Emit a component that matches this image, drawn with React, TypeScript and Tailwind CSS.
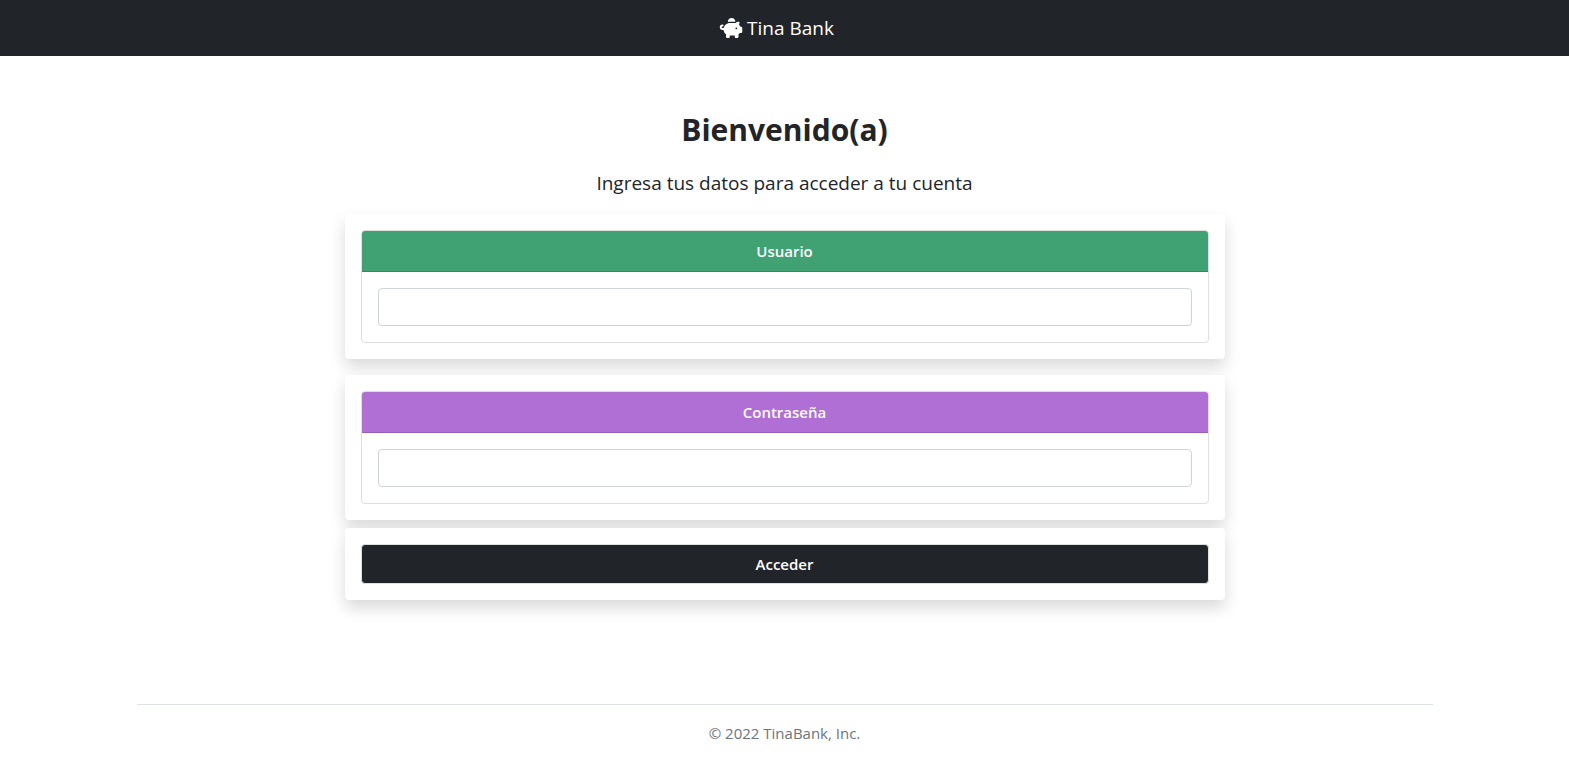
import { FaPiggyBank } from "react-icons/fa6";

const panel = "rounded-[4px] bg-white p-4 shadow-[0_8px_16px_rgba(0,0,0,0.15)]";

function Field({ id, type, label, tone }: { id: string; type: string; label: string; tone: string }) {
  return (
    <div className={panel}>
      <div className="rounded-[4px] border border-[#dfdfdf]">
        <label htmlFor={id} className={`block rounded-t-[3px] border-b px-4 py-2 text-center text-[15px] leading-6 font-semibold text-white ${tone}`}>
          {label}
        </label>
        <div className="p-4">
          <input id={id} type={type} className="block h-[38px] w-full rounded-[4px] border border-[#ced4da] bg-white px-3" />
        </div>
      </div>
    </div>
  );
}

export default function App() {
  return (
    <div className="bg-white font-['Open_Sans',sans-serif] text-base text-[#212529]">
      <nav className="flex h-14 items-center justify-center bg-[#212529] pr-4">
        <a href="#" className="flex items-center gap-1 text-[19px] leading-7 text-white">
          <FaPiggyBank className="h-5 w-6" />
          Tina Bank
        </a>
      </nav>
      <main className="mx-auto w-full max-w-[880px] pt-14">
        <h1 className="text-center text-[30px] leading-9 font-bold">Bienvenido(a)</h1>
        <p className="mt-5 mb-4 text-center text-[19px] leading-[30px]">Ingresa tus datos para acceder a tu cuenta</p>
        <form>
          <div className="flex flex-col gap-4">
            <Field id="usuario" type="text" label="Usuario" tone="border-[#37895f] bg-[#40a173]" />
            <Field id="clave" type="password" label="Contraseña" tone="border-[#995fb9] bg-[#b06fd5]" />
          </div>
          <div className={`relative mt-2 ${panel}`}>
            <button type="button" className="block h-10 w-full rounded-[4px] border border-[#dfdfdf] bg-[#212529] text-center text-[15px] font-semibold text-white">
              Acceder
            </button>
          </div>
        </form>
      </main>
      <footer className="mx-auto mt-26 max-w-[1296px] border-t border-[#dee2e6] py-4 text-center text-[15px] leading-6 text-[#6c757d]">
        © 2022 TinaBank, Inc.
      </footer>
    </div>
  );
}
